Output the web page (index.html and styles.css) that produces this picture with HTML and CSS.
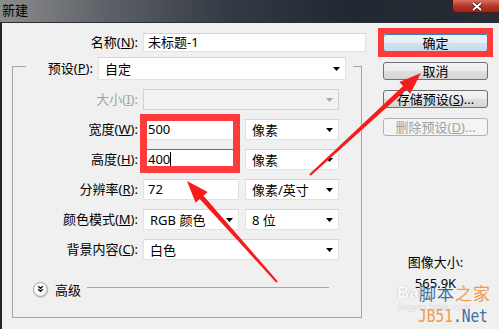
FILE: index.html
```html
<!DOCTYPE html>
<html lang="zh-CN">
<head>
  <meta charset="UTF-8" />
  <meta name="viewport" content="width=device-width, initial-scale=1.0"/>
  <title>新建</title>
  <link rel="stylesheet" href="styles.css">
</head>
<body>

<div class="window">
  <div class="titlebar">
    <span class="title">新建</span>
    <span class="close">
      <svg width="12" height="9" viewBox="0 0 12 9"><path d="M2 1 L10 8 M10 1 L2 8" stroke="#3a1010" stroke-width="3.4"/><path d="M2 1 L10 8 M10 1 L2 8" stroke="#fff" stroke-width="2"/></svg>
    </span>
  </div>

  <div class="dialog">
    <div class="main">
      <div class="name-row">
        <span class="label wide">名称(<u>N</u>):</span>
        <div class="field name">未标题-1</div>
      </div>

      <fieldset class="group">
        <legend>
          <div class="legend-row">
            <span class="label">预设(<u>P</u>):</span>
            <div class="select preset">自定<svg class="caret" width="7" height="4"><path d="M0 0 H7 L3.5 4 Z"/></svg></div>
          </div>
        </legend>

        <div class="rows">
          <span class="label disabled">大小(<u>I</u>):</span>
          <div class="select full off"><svg class="caret" width="7" height="4"><path d="M0 0 H7 L3.5 4 Z"/></svg></div>

          <span class="label">宽度(<u>W</u>):</span>
          <div class="pair">
            <div class="field num">500</div>
            <div class="select unit">像素<svg class="caret" width="7" height="4"><path d="M0 0 H7 L3.5 4 Z"/></svg></div>
          </div>

          <span class="label">高度(<u>H</u>):</span>
          <div class="pair">
            <div class="field num focus">400<span class="cursor"></span></div>
            <div class="select unit">像素<svg class="caret" width="7" height="4"><path d="M0 0 H7 L3.5 4 Z"/></svg></div>
          </div>

          <span class="label">分辨率(<u>R</u>):</span>
          <div class="pair">
            <div class="field num">72</div>
            <div class="select unit">像素/英寸<svg class="caret" width="7" height="4"><path d="M0 0 H7 L3.5 4 Z"/></svg></div>
          </div>

          <span class="label">颜色模式(<u>M</u>):</span>
          <div class="pair">
            <div class="select mode">RGB 颜色<svg class="caret" width="7" height="4"><path d="M0 0 H7 L3.5 4 Z"/></svg></div>
            <div class="select unit">8 位<svg class="caret" width="7" height="4"><path d="M0 0 H7 L3.5 4 Z"/></svg></div>
          </div>

          <span class="label">背景内容(<u>C</u>):</span>
          <div class="select full">白色<svg class="caret" width="7" height="4"><path d="M0 0 H7 L3.5 4 Z"/></svg></div>
        </div>

        <div class="advanced">
          <span class="expand">
            <svg width="14" height="14" viewBox="0 0 14 14"><path d="M4.5 4 L7 6.3 L9.5 4 M4.5 7.2 L7 9.5 L9.5 7.2" fill="none" stroke="#111" stroke-width="1.4"/></svg>
          </span>
          <span class="adv-text">高级</span>
          <span class="rule"></span>
        </div>
      </fieldset>
    </div>

    <div class="side">
      <button class="btn default">确定</button>
      <button class="btn">取消</button>
      <button class="btn">存储预设(<u>S</u>)...</button>
      <button class="btn off">删除预设(<u>D</u>)...</button>

      <div class="imgsize">
        <div>图像大小:</div>
        <div class="size-val">565.9K</div>
      </div>
    </div>
  </div>

  <!-- annotations drawn on top of the screenshot -->
  <svg class="marks" width="499" height="329" viewBox="0 0 499 329">
    <rect x="381" y="31" width="109" height="23" fill="none" stroke="#fd3b3b" stroke-width="6"/>
    <rect x="143.5" y="117.5" width="93" height="52" fill="none" stroke="#fd3b3b" stroke-width="7"/>
    <polygon fill="#f41c1c" points="309.3,174.3 403.1,86.1 399.4,82 421,73 410.2,93.8 406.5,89.7 310.7,175.7"/>
    <polygon fill="#f41c1c" points="276.3,282.7 199.7,199.1 195.6,202.7 187,181 207.6,192.1 203.5,195.7 277.7,281.3"/>
  </svg>

  <div class="watermark">
    <span class="bai">Bai</span>
    <span class="jingyan">jingyan.baidu.com</span>
    <span class="jb-cn"><b class="blue">脚本</b><b class="orange">之家</b></span>
    <span class="jb-en"><b class="orange">JB51</b><b class="blue">.Net</b></span>
  </div>
</div>

</body>
</html>
```

FILE: styles.css
```css
* {
  box-sizing: border-box;
}
body {
  margin: 0;
  font-family: "Noto Sans", "Noto Sans CJK SC", sans-serif;
  font-size: 13px;
  color: #000;
}
.window {
  position: relative;
  width: 499px;
  height: 329px;
  overflow: hidden;
  background: #f0f0f0;
}

/* title bar */
.titlebar {
  position: relative;
  height: 23px;
  background: linear-gradient(to right, #8c8c8c 0%, #5c6066 22%, #353b44 45%, #222831 70%, #262c34 100%);
  border-bottom: 1px solid #2a3038;
}
.title {
  display: block;
  padding: 1px 0 0 2px;
  line-height: 17px;
  font-size: 13px;
  font-family: "Noto Sans CJK SC", sans-serif;
}
.close {
  position: absolute;
  top: -1px;
  right: -6px;
  width: 53px;
  height: 14px;
  border: 1px solid #4a1a16;
  border-radius: 0 0 0 4px;
  background: linear-gradient(#d9725f, #b4382a 50%, #9c2418);
  display: flex;
  align-items: center;
  justify-content: center;
  padding-right: 4px;
}

/* dialog body */
.dialog {
  display: flex;
  height: 306px;
  border-left: 2px solid #1e252e;
}
.main {
  flex: 0 0 371px;
  padding: 10px 0 0 10px;
}
.label {
  display: flex;
  align-items: center;
  justify-content: flex-end;
  white-space: nowrap;
  line-height: 21px;
}
.label u {
  text-underline-offset: 1px;
}
.label.disabled {
  color: #a3a3a3;
}
.name-row {
  display: flex;
  height: 19px;
}
.label.wide {
  width: 126px;
  margin-right: 5px;
  line-height: 19px;
}
.field {
  height: 21px;
  line-height: 19px;
  padding-left: 4px;
  background: #fff;
  border: 1px solid #e2e2e2;
  border-top-color: #d4d4d4;
  white-space: nowrap;
}
.field.name {
  width: 223px;
  height: 19px;
  line-height: 17px;
}
.field.num {
  width: 96px;
}
.field.focus {
  border-color: #3d7bad;
}
.cursor {
  display: inline-block;
  width: 1px;
  height: 14px;
  background: #000;
  vertical-align: -2px;
}

.select {
  display: flex;
  align-items: center;
  justify-content: space-between;
  height: 21px;
  padding: 0 5px 0 6px;
  background: #fff;
  border: 1px solid #e2e2e2;
  border-top-color: #d4d4d4;
  white-space: nowrap;
}
.select.off {
  background: #f2f2f2;
  border-color: #d2d2d2;
  justify-content: flex-end;
}
.select.off .caret {
  fill: #a8a8a8;
}
.caret {
  flex: 0 0 7px;
  fill: #000;
}
.select.full {
  width: 196px;
}
.select.unit {
  width: 94px;
}
.select.mode {
  width: 96px;
}
.pair {
  display: flex;
  gap: 6px;
}

/* group box */
.group {
  margin: 0;
  padding: 0;
  width: 350px;
  min-width: 0;
  border: 1px solid #a6a6a6;
}
.group legend {
  margin-left: 13px;
  padding: 5px 7px 0 0;
}
.legend-row {
  display: flex;
  gap: 5px;
}
.legend-row .label {
  width: 67px;
  line-height: 23px;
}
.select.preset {
  width: 248px;
  height: 23px;
}
.rows {
  display: grid;
  grid-template-columns: 125px auto;
  grid-auto-rows: 21px;
  column-gap: 5px;
  row-gap: 9px;
  padding-top: 9px;
}
.advanced {
  display: flex;
  align-items: center;
  height: 16px;
  margin: 21px 32px 20px 0;
  padding-left: 20px;
}
.expand {
  width: 15px;
  height: 15px;
  border: 1px solid #a0a0a0;
  border-radius: 50%;
  background: radial-gradient(circle at 40% 35%, #fff 40%, #dcdcdc);
  box-shadow: 0 1px 1px rgba(0, 0, 0, 0.15);
  display: flex;
  align-items: center;
  justify-content: center;
}
.adv-text {
  margin-left: 7px;
  font-size: 13px;
}
.rule {
  flex: 1;
  height: 1px;
  margin: -3px 0 0 6px;
  background: #a6a6a6;
}

/* buttons */
.side {
  flex: 0 0 105px;
  margin-left: 10px;
  padding-top: 11px;
  display: flex;
  flex-direction: column;
}
.btn {
  height: 18px;
  margin-bottom: 10px;
  padding: 0;
  font-family: "Noto Sans", "Noto Sans CJK SC", sans-serif;
  font-size: 13px;
  line-height: 16px;
  color: #000;
  border: 1px solid #707070;
  border-radius: 3px;
  background: linear-gradient(#f4f4f4 0%, #ececec 50%, #dfdfdf 51%, #d6d6d6 100%);
}
.btn.default {
  border-color: #3c7fb1;
  background: linear-gradient(#eef5fa 0%, #e2edf5 50%, #d3e2ee 51%, #c8dbe9 100%);
}
.btn.off {
  color: #a0a0a0;
  border-color: #adb2b5;
  background: #f4f4f4;
}
.imgsize {
  margin-top: 108px;
  text-align: center;
  line-height: 16px;
}
.size-val {
  margin-top: 5px;
}

/* overlays */
.marks {
  position: absolute;
  left: 0;
  top: 0;
  pointer-events: none;
}
.watermark span {
  position: absolute;
  white-space: nowrap;
}
.watermark b {
  font-weight: normal;
}
.bai {
  left: 397px;
  top: 283px;
  font-family: "Liberation Sans", sans-serif;
  font-weight: bold;
  font-size: 17px;
  color: #fafafa;
  text-shadow: 0 0 1px #b8b8b8, 0 0 1px #b8b8b8;
}
.jingyan {
  left: 398px;
  top: 302px;
  font-family: "Liberation Sans", sans-serif;
  font-size: 9px;
  color: #dcdcdc;
}
.jb-cn {
  left: 419px;
  top: 282px;
  font-family: "Noto Sans CJK SC", sans-serif;
  font-size: 17px;
  line-height: 22px;
  letter-spacing: 1px;
}
.jb-en {
  left: 418px;
  top: 304px;
  font-family: "DejaVu Sans Mono", monospace;
  font-size: 14.5px;
  line-height: 18px;
  transform: scaleY(1.25);
  transform-origin: left top;
}
.blue {
  color: #3b6f9a;
}
.orange {
  color: #f39a48;
}
```
